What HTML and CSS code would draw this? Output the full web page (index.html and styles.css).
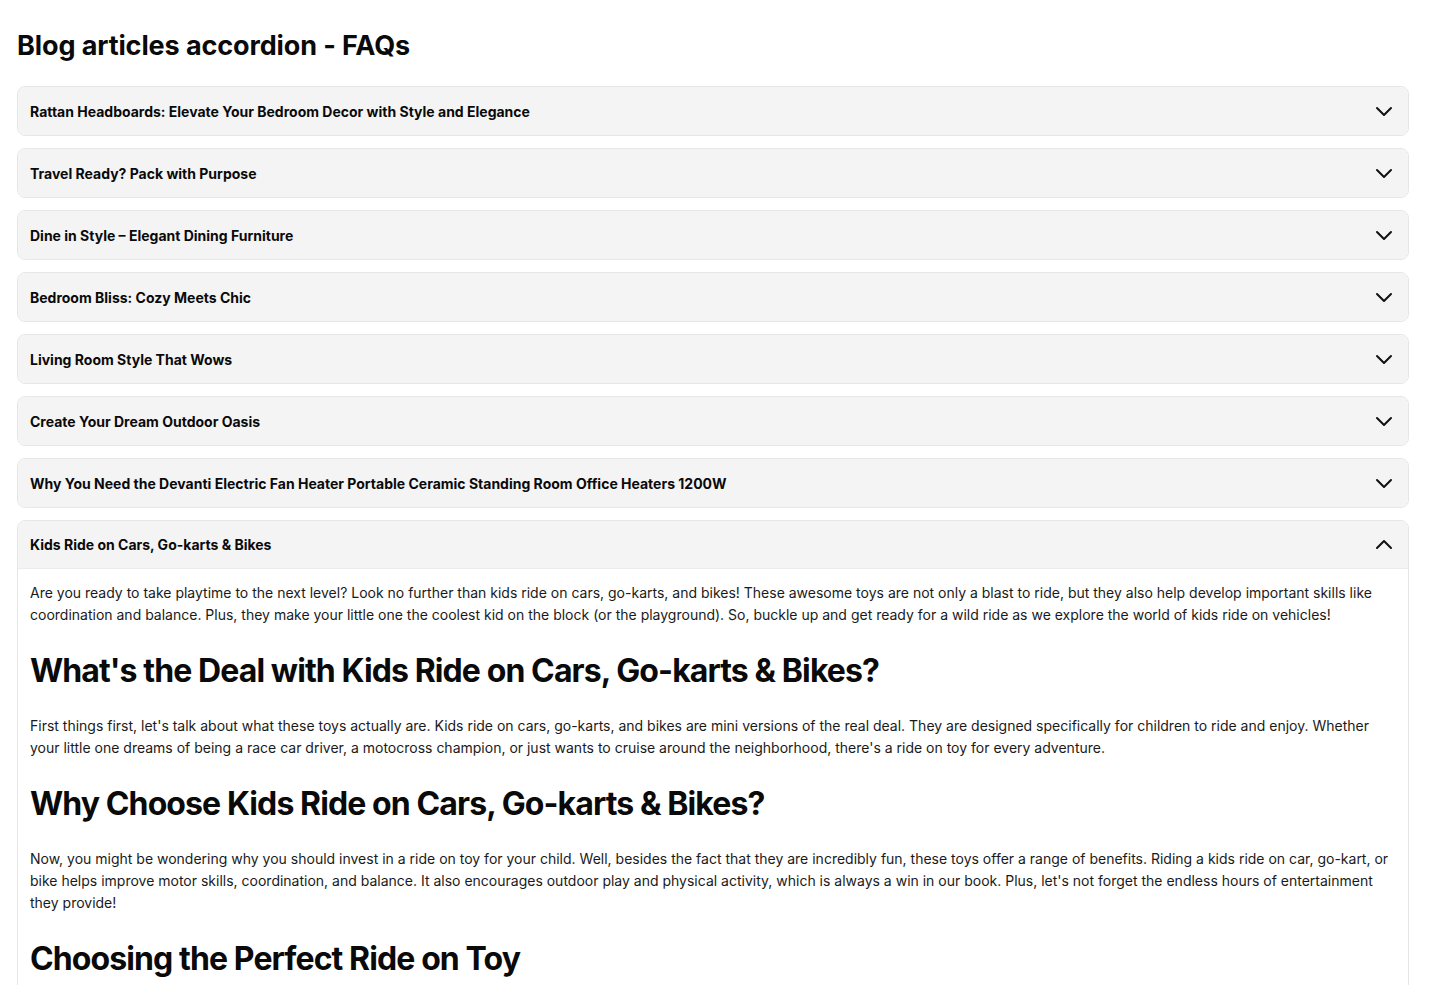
FILE: index.html
```html
<!DOCTYPE html>
<html lang="en">
<head>
<meta charset="utf-8">
<title>Blog articles accordion - FAQs</title>
<link rel="stylesheet" href="styles.css">
</head>
<body>
<main class="page">
  <h1 class="title">Blog articles accordion - FAQs</h1>
  <div class="accordion">
    <div class="item">
      <div class="item-head"><span class="item-title">Rattan Headboards: Elevate Your Bedroom Decor with Style and Elegance</span><svg class="chev" viewBox="0 0 20 20"><path d="M3 7l7 7 7-7"/></svg></div>
    </div>
    <div class="item">
      <div class="item-head"><span class="item-title">Travel Ready? Pack with Purpose</span><svg class="chev" viewBox="0 0 20 20"><path d="M3 7l7 7 7-7"/></svg></div>
    </div>
    <div class="item">
      <div class="item-head"><span class="item-title">Dine in Style – Elegant Dining Furniture</span><svg class="chev" viewBox="0 0 20 20"><path d="M3 7l7 7 7-7"/></svg></div>
    </div>
    <div class="item">
      <div class="item-head"><span class="item-title">Bedroom Bliss: Cozy Meets Chic</span><svg class="chev" viewBox="0 0 20 20"><path d="M3 7l7 7 7-7"/></svg></div>
    </div>
    <div class="item">
      <div class="item-head"><span class="item-title">Living Room Style That Wows</span><svg class="chev" viewBox="0 0 20 20"><path d="M3 7l7 7 7-7"/></svg></div>
    </div>
    <div class="item">
      <div class="item-head"><span class="item-title">Create Your Dream Outdoor Oasis</span><svg class="chev" viewBox="0 0 20 20"><path d="M3 7l7 7 7-7"/></svg></div>
    </div>
    <div class="item">
      <div class="item-head"><span class="item-title">Why You Need the Devanti Electric Fan Heater Portable Ceramic Standing Room Office Heaters 1200W</span><svg class="chev" viewBox="0 0 20 20"><path d="M3 7l7 7 7-7"/></svg></div>
    </div>
    <div class="item open">
      <div class="item-head"><span class="item-title">Kids Ride on Cars, Go-karts &amp; Bikes</span><svg class="chev" viewBox="0 0 20 20"><path d="M3 13l7-7 7 7"/></svg></div>
      <div class="item-body">
        <p>Are you ready to take playtime to the next level? Look no further than kids ride on cars, go-karts, and bikes! These awesome toys are not only a blast to ride, but they also help develop important skills like coordination and balance. Plus, they make your little one the coolest kid on the block (or the playground). So, buckle up and get ready for a wild ride as we explore the world of kids ride on vehicles!</p>
        <h2>What's the Deal with Kids Ride on Cars, Go-karts &amp; Bikes?</h2>
        <p>First things first, let's talk about what these toys actually are. Kids ride on cars, go-karts, and bikes are mini versions of the real deal. They are designed specifically for children to ride and enjoy. Whether your little one dreams of being a race car driver, a motocross champion, or just wants to cruise around the neighborhood, there's a ride on toy for every adventure.</p>
        <h2>Why Choose Kids Ride on Cars, Go-karts &amp; Bikes?</h2>
        <p>Now, you might be wondering why you should invest in a ride on toy for your child. Well, besides the fact that they are incredibly fun, these toys offer a range of benefits. Riding a kids ride on car, go-kart, or bike helps improve motor skills, coordination, and balance. It also encourages outdoor play and physical activity, which is always a win in our book. Plus, let's not forget the endless hours of entertainment they provide!</p>
        <h2>Choosing the Perfect Ride on Toy</h2>
        <p>With so many options available, choosing the perfect ride on toy for your child can feel overwhelming. Consider your child's age, size and interests, and look for safety features such as seat belts, sturdy construction and speed controls.</p>
      </div>
    </div>
  </div>
</main>
</body>
</html>
```

FILE: styles.css
```css
* { box-sizing: border-box; }

body {
  margin: 0;
  background: #ffffff;
  color: #111111;
  font-family: Inter, "Liberation Sans", Arial, sans-serif;
}

.page {
  padding: 30px 20px 0 17px;
}

.title {
  margin: 0 0 24px;
  font-size: 27px;
  line-height: 32px;
  font-weight: 700;
  letter-spacing: -0.004em;
  color: #0a0a0a;
}

.accordion {
  display: flex;
  flex-direction: column;
  gap: 12px;
}

.item {
  border: 1px solid #e6e6e6;
  border-radius: 8px;
  overflow: hidden;
  background: #ffffff;
}

.item-head {
  height: 48px;
  display: flex;
  align-items: center;
  justify-content: space-between;
  padding: 0 14px 0 12px;
  background: #f4f4f5;
}

.item-title {
  font-size: 14px;
  font-weight: 700;
  color: #0a0a0a;
}

.chev {
  width: 20px;
  height: 20px;
  flex: none;
  fill: none;
  stroke: #111111;
  stroke-width: 2;
  stroke-linecap: round;
  stroke-linejoin: round;
}

.item.open .item-head {
  border-bottom: 1px solid #ececec;
}

.item-body {
  padding: 13px 12px 16px;
}

.item-body p {
  margin: 0;
  font-size: 14px;
  line-height: 22px;
  color: #1a1a1a;
}

.item-body h2 {
  margin: 26px 0 25px;
  font-size: 32px;
  line-height: 38px;
  font-weight: 700;
  letter-spacing: -0.028em;
  color: #0a0a0a;
}
```
